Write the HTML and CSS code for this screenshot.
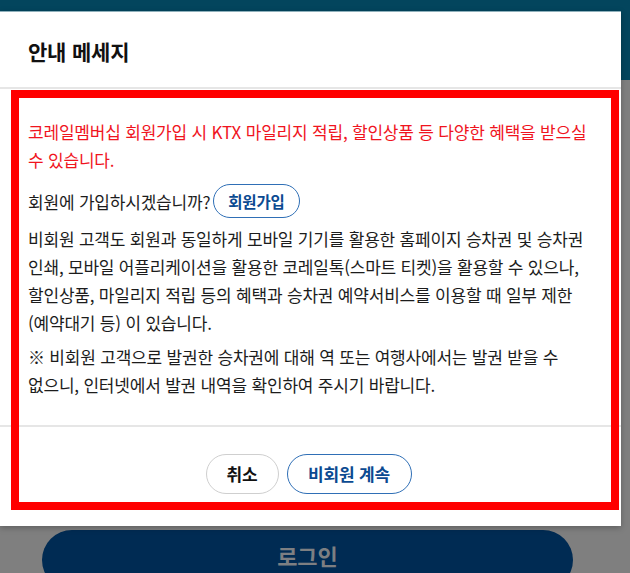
FILE: index.html
```html
<!DOCTYPE html>
<html lang="ko">
<head>
<meta charset="utf-8">
<title>안내 메세지</title>
<link rel="stylesheet" href="styles.css">
</head>
<body>
<div class="page">
  <div class="page-top"></div>
  <div class="page-main">
    <button class="login-btn" type="button">로그인</button>
  </div>
</div>

<div class="modal">
  <div class="modal-head">
    <h2 class="modal-title">안내 메세지</h2>
  </div>
  <div class="modal-body">
    <p class="msg msg-red">코레일멤버십 회원가입 시 KTX 마일리지 적립, 할인상품 등 다양한 혜택을 받으실 수 있습니다.</p>
    <p class="msg msg-join">회원에 가입하시겠습니까?<button class="btn-join" type="button">회원가입</button></p>
    <p class="msg">비회원 고객도 회원과 동일하게 모바일 기기를 활용한 홈페이지 승차권 및 승차권 인쇄, 모바일 어플리케이션을 활용한 코레일톡(스마트 티켓)을 활용할 수 있으나, 할인상품, 마일리지 적립 등의 혜택과 승차권 예약서비스를 이용할 때 일부 제한 (예약대기 등) 이 있습니다.</p>
    <p class="msg">※ 비회원 고객으로 발권한 승차권에 대해 역 또는 여행사에서는 발권 받을 수 없으니, 인터넷에서 발권 내역을 확인하여 주시기 바랍니다.</p>
  </div>
  <div class="modal-foot">
    <button class="btn btn-cancel" type="button">취소</button>
    <button class="btn btn-guest" type="button">비회원 계속</button>
  </div>
</div>

<div class="highlight"></div>
</body>
</html>
```

FILE: styles.css
```css
html, body {
  margin: 0;
  padding: 0;
}
body {
  width: 630px;
  height: 573px;
  overflow: hidden;
  background: #7f7f7f;
  font-family: "Noto Sans CJK KR", "Noto Sans", sans-serif;
  position: relative;
}
.page-top {
  height: 80px;
  background: #03455d;
}
.page-main {
  padding: 450px 57px 0 42px;
}
.login-btn {
  display: block;
  width: 531px;
  height: 60px;
  border: 0;
  border-radius: 30px;
  background: #002b53;
  color: #7d7f82;
  font-family: inherit;
  font-size: 22px;
  font-weight: 700;
  padding: 0 0 10px;
}
.modal {
  position: absolute;
  top: 11px;
  left: 0;
  width: 621px;
  height: 515px;
  background: #fff;
  border-top: 1px solid #8fb0bb;
  box-sizing: border-box;
  box-shadow: 0 2px 6px rgba(0,0,0,0.25);
  display: flex;
  flex-direction: column;
}
.modal-head {
  padding: 27px 28px 23px;
  border-bottom: 2px solid #e6e6e6;
}
.modal-title {
  margin: 0;
  font-size: 21px;
  line-height: 25px;
  font-weight: 700;
  color: #111;
  letter-spacing: -0.2px;
}
.modal-body {
  padding: 29px 28px 26px;
  border-bottom: 2px solid #e6e6e6;
}
.msg {
  margin: 0 0 7px;
  font-size: 17px;
  line-height: 27.7px;
  color: #1c1c1c;
  letter-spacing: -0.2px;
  word-break: keep-all;
}
.msg:last-child {
  margin-bottom: 0;
}
.msg-red {
  color: #f0141e;
  margin-bottom: 11px;
}
.msg-join {
  display: flex;
  align-items: center;
  margin-bottom: 7px;
}
.btn-join {
  margin-left: 3px;
  height: 34px;
  padding: 0 14px;
  border: 1px solid #2f6fb6;
  border-radius: 17px;
  background: #fff;
  color: #0b4a91;
  font-family: inherit;
  font-size: 15.5px;
  font-weight: 700;
  letter-spacing: -0.2px;
}
.modal-foot {
  display: flex;
  justify-content: center;
  gap: 8px;
  padding: 27px 0 0;
  margin-left: -4px;
}
.btn {
  height: 40px;
  border-radius: 20px;
  background: #fff;
  font-family: inherit;
  font-size: 17px;
  font-weight: 700;
  letter-spacing: -0.2px;
}
.btn-cancel {
  width: 73px;
  border: 1px solid #cfcfcf;
  color: #111;
  padding: 0;
}
.btn-guest {
  width: 125px;
  border: 1px solid #2f6fb6;
  color: #0b4a91;
  padding: 0;
}
.highlight {
  position: absolute;
  left: 11px;
  top: 90px;
  width: 608px;
  height: 420px;
  border: 8px solid #ff0000;
  box-sizing: border-box;
  pointer-events: none;
}
```
